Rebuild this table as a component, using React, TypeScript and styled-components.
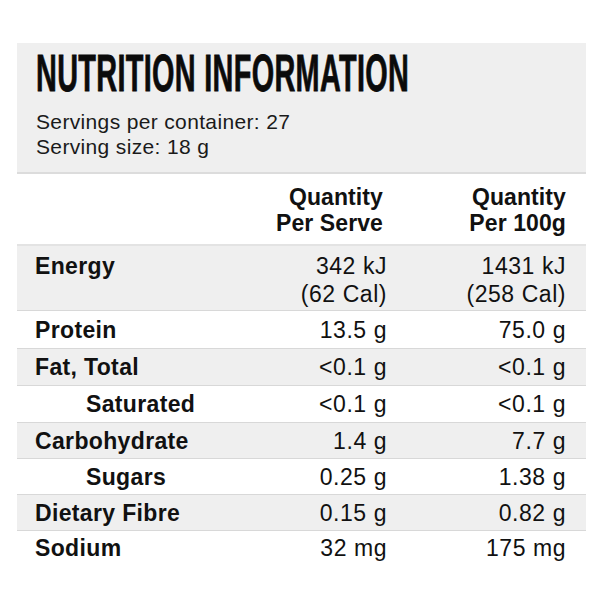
import React from "react";
import styled, { createGlobalStyle } from "styled-components";

const GlobalStyle = createGlobalStyle`
  html, body {
    margin: 0;
    padding: 0;
    background: #ffffff;
  }
  body {
    font-family: "Liberation Sans", Arial, sans-serif;
    color: #111111;
  }
`;

const Page = styled.div`
  width: 600px;
  height: 600px;
  padding: 43px 14px 0 17px;
  box-sizing: border-box;
`;

const Panel = styled.div`
  width: 569px;
  display: flex;
  flex-direction: column;
`;

const Header = styled.div`
  background: #efefef;
  padding: 2px 18px 0 19px;
  border-bottom: 2px solid #dcdcdc;
  height: 131px;
  box-sizing: border-box;
`;

const Title = styled.h1`
  margin: 0;
  font-weight: 700;
  font-size: 51px;
  line-height: 58px;
  letter-spacing: 0.6px;
  transform: scaleX(0.565);
  transform-origin: left center;
  white-space: nowrap;
  color: #0b0b0b;
  -webkit-text-stroke: 0.8px #0b0b0b;
`;

const Meta = styled.div`
  margin-top: 6px;
  font-size: 21px;
  line-height: 25px;
  color: #1a1a1a;
  letter-spacing: 0.35px;
`;

const Row = styled.div<{ $shade?: boolean; $h: number; $last?: boolean }>`
  display: grid;
  grid-template-columns: 1fr 150px 179px;
  align-items: center;
  padding: 0 20px 0 18px;
  height: ${(p) => p.$h}px;
  box-sizing: border-box;
  background: ${(p) => (p.$shade ? "#efefef" : "#ffffff")};
  border-bottom: ${(p) => (p.$last ? "none" : "1px solid #d8d8d8")};
  font-size: 23px;
  line-height: 28px;
`;

const TallRow = styled(Row)`
  align-items: start;
  padding-top: 6px;
`;

const HeadRow = styled(Row)`
  line-height: 26px;
  padding-top: 2px;
  border-bottom: 2px solid #e3e3e3;
`;

const Label = styled.div<{ $sub?: boolean }>`
  font-weight: 700;
  letter-spacing: 0.35px;
  padding-left: ${(p) => (p.$sub ? "51px" : "0")};
`;

const Value = styled.div<{ $bold?: boolean; $inset?: number }>`
  text-align: right;
  font-weight: ${(p) => (p.$bold ? 700 : 400)};
  letter-spacing: ${(p) => (p.$bold ? "0.1px" : "0.55px")};
  white-space: nowrap;
  margin-right: ${(p) => p.$inset ?? 0}px;
`;

type Nutrient = {
  name: string;
  serve: string[];
  per100: string[];
  sub?: boolean;
  h: number;
};

const rows: Nutrient[] = [
  { name: "Energy", serve: ["342 kJ", "(62 Cal)"], per100: ["1431 kJ", "(258 Cal)"], h: 65 },
  { name: "Protein", serve: ["13.5 g"], per100: ["75.0 g"], h: 38 },
  { name: "Fat, Total", serve: ["<0.1 g"], per100: ["<0.1 g"], h: 37 },
  { name: "Saturated", serve: ["<0.1 g"], per100: ["<0.1 g"], sub: true, h: 37 },
  { name: "Carbohydrate", serve: ["1.4 g"], per100: ["7.7 g"], h: 36 },
  { name: "Sugars", serve: ["0.25 g"], per100: ["1.38 g"], sub: true, h: 36 },
  { name: "Dietary Fibre", serve: ["0.15 g"], per100: ["0.82 g"], h: 36 },
  { name: "Sodium", serve: ["32 mg"], per100: ["175 mg"], h: 33 },
];

const Lines = ({ items }: { items: string[] }) => (
  <>
    {items.map((t, i) => (
      <div key={i}>{t}</div>
    ))}
  </>
);

export default function App() {
  return (
    <>
      <GlobalStyle />
      <Page>
        <Panel>
          <Header>
            <Title>NUTRITION INFORMATION</Title>
            <Meta>
              <div>Servings per container: 27</div>
              <div>Serving size: 18 g</div>
            </Meta>
          </Header>
          <HeadRow $h={72}>
            <div />
            <Value $bold $inset={4}>
              <div>Quantity</div>
              <div>Per Serve</div>
            </Value>
            <Value $bold>
              <div>Quantity</div>
              <div>Per 100g</div>
            </Value>
          </HeadRow>
          {rows.map((r, i) => {
            const Comp = r.serve.length > 1 ? TallRow : Row;
            return (
              <Comp
                key={r.name}
                $h={r.h}
                $shade={i % 2 === 0}
                $last={i === rows.length - 1}
              >
                <Label $sub={r.sub}>{r.name}</Label>
                <Value>
                  <Lines items={r.serve} />
                </Value>
                <Value>
                  <Lines items={r.per100} />
                </Value>
              </Comp>
            );
          })}
        </Panel>
      </Page>
    </>
  );
}
